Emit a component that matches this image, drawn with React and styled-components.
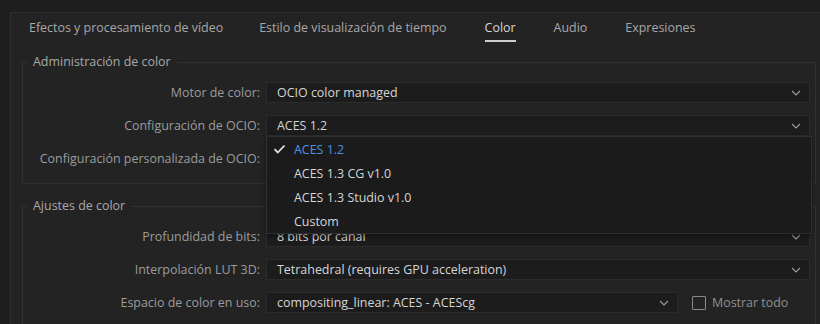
import styled, { createGlobalStyle } from 'styled-components'

const GlobalStyle = createGlobalStyle`
    html, body {
        margin: 0;
        padding: 0;
        background: #1e1e1e;
        overflow: hidden;
    }
    body {
        font-family: "Open Sans", "Noto Sans", sans-serif;
        font-size: 12.45px;
        color: #a3a3a3;
    }
`

const tabs = [
    'Efectos y procesamiento de vídeo',
    'Estilo de visualización de tiempo',
    'Color',
    'Audio',
    'Expresiones',
]

const ocioOptions = ['ACES 1.2', 'ACES 1.3 CG v1.0', 'ACES 1.3 Studio v1.0', 'Custom']

const Chevron = () => (
    <svg width="10" height="6" viewBox="0 0 10 6">
        <path d="M1 1l4 4 4-4" fill="none" stroke="#9a9a9a" strokeWidth="1.2" />
    </svg>
)

const Check = () => (
    <svg width="13" height="10" viewBox="0 0 13 10">
        <path d="M1.5 5.2l3.3 3.3L11.5 1.5" fill="none" stroke="#e2e2e2" strokeWidth="1.8" />
    </svg>
)

const Select = ({ value, children }) => (
    <SelectBox>
        <span>{value}</span>
        <Chevron />
        {children}
    </SelectBox>
)

const App = () => {
    return (
        <>
            <GlobalStyle />
            <Panel>
                <TabBar>
                    {tabs.map((t) => (
                        <Tab key={t} $active={t === 'Color'}>
                            {t}
                        </Tab>
                    ))}
                </TabBar>

                <Group>
                    <legend>Administración de color</legend>
                    <Row>
                        <Label>Motor de color:</Label>
                        <Select value="OCIO color managed" />
                    </Row>
                    <Row>
                        <Label>Configuración de OCIO:</Label>
                        <Select value="ACES 1.2">
                            <Menu>
                                {ocioOptions.map((o, i) => (
                                    <MenuItem key={o} $selected={i === 0}>
                                        <CheckSlot>{i === 0 && <Check />}</CheckSlot>
                                        {o}
                                    </MenuItem>
                                ))}
                            </Menu>
                        </Select>
                    </Row>
                    <Row>
                        <Label>Configuración personalizada de OCIO:</Label>
                        <Select value="" />
                    </Row>
                </Group>

                <Group $second>
                    <legend>Ajustes de color</legend>
                    <Row>
                        <Label>Profundidad de bits:</Label>
                        <Select value="8 bits por canal" />
                    </Row>
                    <Row>
                        <Label>Interpolación LUT 3D:</Label>
                        <Select value="Tetrahedral (requires GPU acceleration)" />
                    </Row>
                    <Row>
                        <Label>Espacio de color en uso:</Label>
                        <Inline>
                            <Select value="compositing_linear: ACES - ACEScg" />
                            <CheckLabel>
                                <Box />
                                Mostrar todo
                            </CheckLabel>
                        </Inline>
                    </Row>
                </Group>
            </Panel>
        </>
    )
}

const Panel = styled.div`
    margin: 12px 0 0 10px;
    width: 830px;
    height: 340px;
    background: #232323;
    border: 1px solid #2e2e2e;
    box-sizing: border-box;
`

const TabBar = styled.div`
    display: flex;
    height: 38px;
    padding: 0 0 0 18px;
    gap: 36px;
    align-items: stretch;

    & > div:nth-child(n + 3) {
        margin-left: 2px;
    }
`

const Tab = styled.div`
    display: flex;
    align-items: center;
    padding-top: 2px;
    white-space: nowrap;
    color: ${(p) => (p.$active ? '#d8d8d8' : '#a8a8a8')};
    border-bottom: 2px solid ${(p) => (p.$active ? '#cfcfcf' : 'transparent')};
    box-sizing: border-box;
    height: 29px;
`

const Group = styled.fieldset`
    margin: ${(p) => (p.$second ? '13px' : '2px')} 0 0 11px;
    width: 794px;
    box-sizing: border-box;
    border: 1px solid #303030;
    padding: 11px 5px 14px 0;
    display: flex;
    flex-direction: column;
    gap: 12px;
    min-width: 0;

    legend {
        padding: 0 6px;
        margin-left: 4px;
        color: #a9a9a9;
        line-height: 18px;
    }
`

const Row = styled.div`
    display: grid;
    grid-template-columns: 237px 1fr;
    column-gap: 6px;
    align-items: center;
    height: 21px;
`

const Label = styled.div`
    text-align: right;
    white-space: nowrap;
    color: #9c9c9c;
`

const Inline = styled.div`
    display: flex;
    align-items: center;
    gap: 14px;

    & > div:first-child {
        width: 412px;
        flex: none;
    }
`

const SelectBox = styled.div`
    position: relative;
    display: flex;
    align-items: center;
    justify-content: space-between;
    height: 21px;
    box-sizing: border-box;
    padding: 0 8px 0 10px;
    background: #1c1c1c;
    border: 1px solid #2b2b2b;
    color: #d6d6d6;
    white-space: nowrap;
`

const Menu = styled.div`
    position: absolute;
    top: calc(100% + 1px);
    left: -1px;
    right: -3px;
    z-index: 5;
    background: #1b1b1b;
    border: 1px solid #2f2f2f;
    box-shadow: 0 2px 4px rgba(0, 0, 0, 0.4);
`

const MenuItem = styled.div`
    display: flex;
    align-items: center;
    height: 24px;
    padding-left: 6px;
    color: ${(p) => (p.$selected ? '#4b92e6' : '#d6d6d6')};
`

const CheckSlot = styled.span`
    display: inline-flex;
    width: 21px;
`

const CheckLabel = styled.label`
    display: flex;
    align-items: center;
    gap: 6px;
    color: #8f8f8f;
`

const Box = styled.span`
    width: 12px;
    height: 12px;
    border: 1.5px solid #8a8a8a;
    border-radius: 1px;
`

export default App
